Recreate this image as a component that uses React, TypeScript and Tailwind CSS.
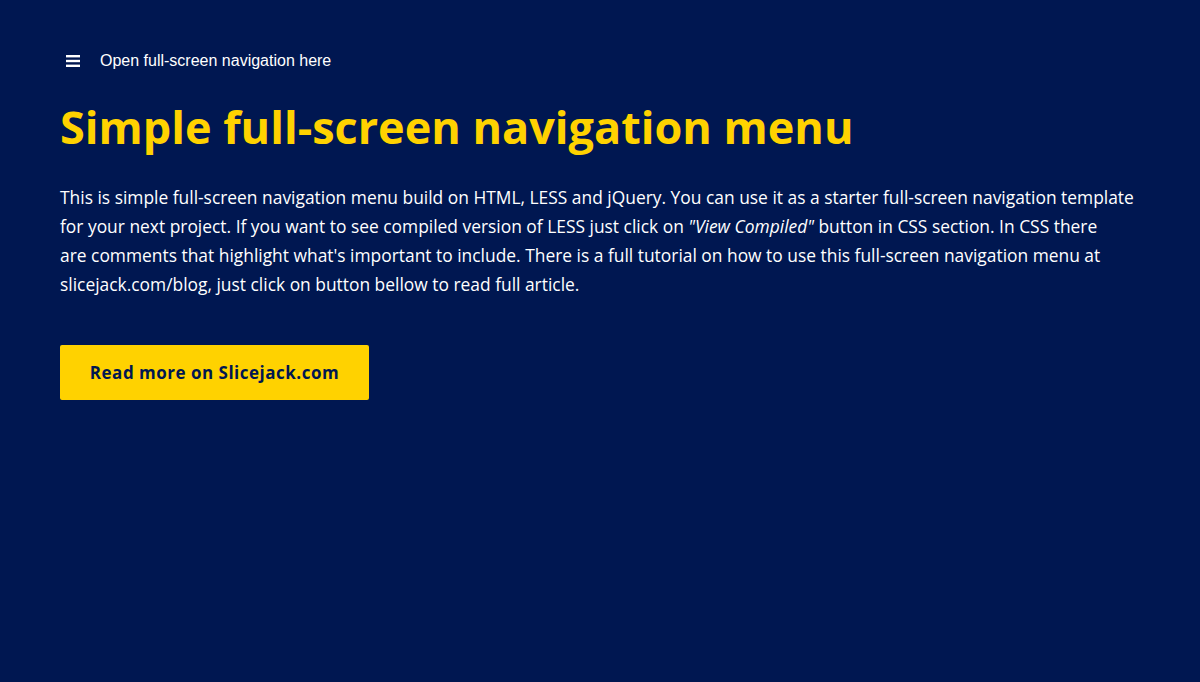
import { FC } from 'react';

const Bars: FC = () => (
  <svg width="14" height="12" viewBox="0 0 14 12" fill="#fff" aria-hidden>
    <rect x="0" y="0" width="14" height="2.4" />
    <rect x="0" y="4.8" width="14" height="2.4" />
    <rect x="0" y="9.6" width="14" height="2.4" />
  </svg>
);

export default function App() {
  return (
    <div className="min-h-[682px] w-full bg-[#001751] px-[60px] pt-[52px] font-['Open_Sans',sans-serif]">
      <div className="flex items-center h-[17px]">
        <span className="ml-[6px] flex items-center">
          <Bars />
        </span>
        <span className="ml-[20px] text-[16px] leading-none text-white font-['Liberation_Sans',Arial,sans-serif]">
          Open full-screen navigation here
        </span>
      </div>

      <h1 className="mt-[28px] text-[45px] leading-[60px] font-bold text-[#ffd200]">
        Simple full-screen navigation menu
      </h1>

      <p className="mt-[26px] max-w-[1120px] text-[17.4px] leading-[29px] text-white">
        This is simple full-screen navigation menu build on HTML, LESS and jQuery. You can use it as a starter full-screen navigation template
        <br />
        for your next project. If you want to see compiled version of LESS just click on <em>"View Compiled"</em> button in CSS section. In CSS there
        <br />
        are comments that highlight what's important to include. There is a full tutorial on how to use this full-screen navigation menu at
        <br />
        slicejack.com/blog, just click on button bellow to read full article.
      </p>

      <button className="mt-[46px] h-[55px] w-[309px] rounded-[2px] bg-[#ffd200] text-[17px] font-bold tracking-[0.5px] text-[#001751]">
        Read more on Slicejack.com
      </button>
    </div>
  );
}
